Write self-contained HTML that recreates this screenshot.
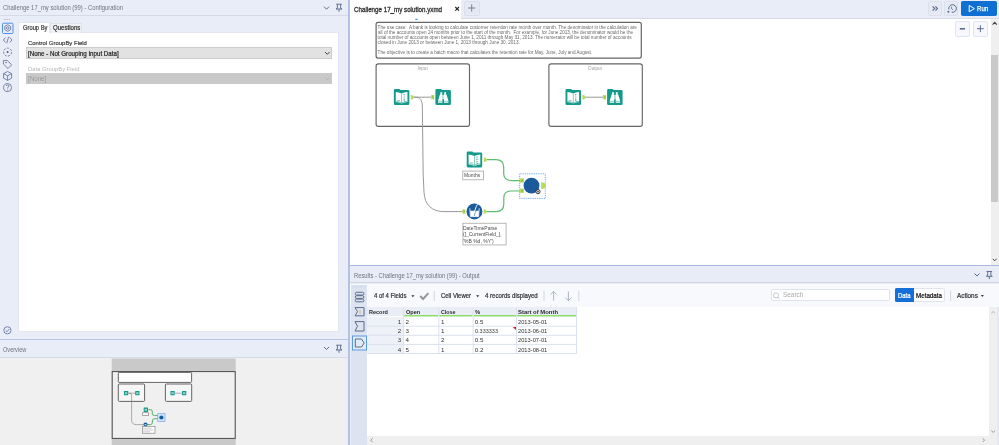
<!DOCTYPE html>
<html><head><meta charset="utf-8">
<style>
*{margin:0;padding:0;box-sizing:border-box}
html,body{width:999px;height:445px;overflow:hidden;background:#e9edf8;font-family:"Liberation Sans",sans-serif;position:relative}
.a{position:absolute}
.t{position:absolute;white-space:pre;line-height:1}
svg{position:absolute;overflow:visible}
</style></head><body>
<div id="wrap" style="position:absolute;left:0;top:0;width:999px;height:445px;filter:blur(0.35px)">

<!-- ===== LEFT CONFIG PANEL ===== -->
<div class="a" style="left:0;top:0;width:348px;height:16px;background:#e9edf8;border-bottom:1px solid #d5dae6"></div>
<div class="a" style="left:0;top:16px;width:348px;height:323px;background:#e9edf8"></div>
<!-- white content -->
<div class="a" style="left:18px;top:32px;width:321px;height:300px;background:#fff;border:1px solid #e3e6ee"></div>
<!-- tabs -->
<div class="a" style="left:50px;top:23px;width:32px;height:10px;background:#eef0f5;border:1px solid #e0e3ea;border-bottom:none"></div>
<div class="a" style="left:18px;top:22px;width:32px;height:11px;background:#fff;border:1px solid #e3e6ee;border-bottom:none"></div>
<!-- dropdowns -->
<div class="a" style="left:26px;top:47px;width:306px;height:12px;background:#e2e2e2;border:1px solid #cdcdcd"></div>
<div class="a" style="left:26px;top:73px;width:306px;height:11px;background:#c9c9c9"></div>
<!-- config header icons -->
<svg style="left:0;top:0" width="999" height="445">
 <!-- chevron + pin header -->
 <path d="M324 6.7 L326.5 9.2 L329 6.7" fill="none" stroke="#5b6b8c" stroke-width="1"/>
 <path transform="translate(0 0)" d="M336.2 4.2 H341.8 M337.4 4.2 V8.3 L336 9 H342 L340.6 8.3 V4.2 M339 9 V11.8" fill="none" stroke="#5b6b8c" stroke-width="0.95"/>
 <!-- dropdown chevrons -->
 <path d="M325 52 L327.3 54.3 L329.6 52" fill="none" stroke="#333" stroke-width="0.9"/>
 <path d="M325 77.5 L327.3 79.8 L329.6 77.5" fill="none" stroke="#b0b0b0" stroke-width="0.9"/>
 <!-- left icon column -->
 <g fill="#9aa3b8"><circle cx="4.3" cy="19.6" r="0.5"/><circle cx="6" cy="19.6" r="0.5"/><circle cx="7.7" cy="19.6" r="0.5"/><circle cx="9.4" cy="19.6" r="0.5"/></g>
 <rect x="2.5" y="23.2" width="10.5" height="10.3" rx="1" fill="#e6ecf8" stroke="#4f8fe6" stroke-width="1"/>
 <g fill="none" stroke="#64739a" stroke-width="0.85">
  <path d="M7.7 24.8 L10.6 26.4 V29.8 L7.7 31.4 L4.8 29.8 V26.4 Z"/><circle cx="7.7" cy="28.1" r="1.3"/>
  <path d="M5.6 37.5 L3.4 40 L5.6 42.5 M9.8 37.5 L12 40 L9.8 42.5 M8.6 36.8 L6.8 43.2"/>
  <circle cx="7.6" cy="52.1" r="4" stroke-dasharray="2.2 1.3"/>
  <path d="M3.4 60.5 V64 L8 68.5 L11.7 64.8 L7.1 60.3 Z"/>
  <path d="M7.6 71.5 L11.6 73.6 V78.2 L7.6 80.4 L3.6 78.2 V73.6 Z M3.6 73.6 L7.6 75.8 L11.6 73.6 M7.6 75.8 V80.4"/>
  <circle cx="7.6" cy="87.6" r="4"/>
  <circle cx="7.4" cy="330.3" r="3.6"/>
  <path d="M5.7 330.4 L7 331.7 L9.3 329"/>
 </g>
 <circle cx="5.9" cy="52.1" r="0" fill="#5b6b8c"/>
 <circle cx="7.6" cy="52.1" r="1.1" fill="#5b6b8c"/>
 <circle cx="6.1" cy="62.5" r="0.7" fill="#5b6b8c"/>
 <path d="M6.3 86 Q6.5 84.8 7.7 84.9 Q9 85 8.9 86.2 Q8.8 87 7.7 87.5 V88.5" fill="none" stroke="#5b6b8c" stroke-width="0.8"/>
 <circle cx="7.7" cy="90" r="0.5" fill="#5b6b8c"/>
</svg>

<!-- separator -->
<div class="a" style="left:0;top:339px;width:348px;height:1.3px;background:#b7c4e3"></div>
<!-- overview header -->
<div class="a" style="left:0;top:340.5px;width:348px;height:17px;background:#e9edf8;border-bottom:1px solid #d5dae6"></div>
<div class="a" style="left:0;top:358px;width:346px;height:87px;background:#f0f0f0"></div>

<!-- vertical splitter -->
<div class="a" style="left:348px;top:0;width:1.6px;height:445px;background:#b3c1e2"></div>

<!-- ===== CANVAS ===== -->
<div class="a" style="left:350px;top:0;width:649px;height:18.5px;background:#e9edf8;border-bottom:1px solid #d5dae6"></div>
<div class="a" style="left:350px;top:0;width:111px;height:19px;background:#fff"></div>
<div class="a" style="left:350px;top:18.5px;width:641px;height:246.5px;background:#fff"></div>
<div class="a" style="left:990.7px;top:18.5px;width:8.3px;height:246.5px;background:#efefef"></div>
<div class="a" style="left:990.8px;top:55px;width:7.1px;height:146.6px;background:#c9c9c9"></div>

<!-- splitter -->
<div class="a" style="left:350px;top:264.8px;width:649px;height:1.5px;background:#aab8de"></div>

<!-- ===== RESULTS ===== -->
<div class="a" style="left:350px;top:266.3px;width:649px;height:17px;background:#e8ecf6;border-bottom:1px solid #d2d6df"></div>
<div class="a" style="left:350px;top:284px;width:649px;height:22.5px;background:#f7f9fd"></div>
<div class="a" style="left:351.2px;top:284.5px;width:16px;height:161px;background:#dde3f0"></div>
<div class="a" style="left:367px;top:306.5px;width:622px;height:129.5px;background:#fff"></div>
<div class="a" style="left:367px;top:436px;width:622px;height:9px;background:#efefef"></div>
<div class="a" style="left:989px;top:306.5px;width:8.3px;height:138.5px;background:#efefef"></div>


<!-- canvas content -->
<svg style="left:0;top:0" width="999" height="445">
 <defs>
  <g id="fold"><path d="M0 1.3 Q0 0 1.3 0 H5.6 L6.6 0.9 H14.2 Q15.5 0.9 15.5 2.2 V14.6 Q15.5 15.9 14.2 15.9 H1.3 Q0 15.9 0 14.6 Z" fill="#14998a"/></g>
  <g id="book"><use href="#fold"/>
   <path d="M1.9 2.9 Q5 3 7.75 4.4 Q10.5 3 13.6 2.9 V13 Q10.5 13.1 7.75 14.5 Q5 13.1 1.9 13 Z" fill="#fff"/>
   <path d="M7.75 4.6 V14.2" stroke="#14998a" stroke-width="0.5"/>
   <path d="M1.9 12.3 Q5 12.4 7.75 13.7 Q10.5 12.4 13.6 12.3" fill="none" stroke="#14998a" stroke-width="0.5"/>
   <g fill="#14998a"><circle cx="10.3" cy="5.6" r="0.6"/><circle cx="10.3" cy="7.9" r="0.6"/><circle cx="10.3" cy="10.1" r="0.6"/><path d="M10 11 L11.6 12.3 L11.2 12.7 L9.6 11.4Z"/><path d="M3.3 11.5 H6.2" stroke="#14998a" stroke-width="0.5"/></g>
  </g>
  <g id="bino"><use href="#fold"/>
   <g fill="#fff">
    <rect x="5" y="3.1" width="1.8" height="2.2"/><rect x="8.8" y="3.1" width="1.8" height="2.2"/>
    <path d="M4.6 5.1 H7 V13.6 H2.6 V11.6 Z"/><path d="M11 5.1 H8.6 V13.6 H13 V11.6 Z"/>
    <rect x="7" y="5.8" width="1.6" height="4.4" opacity="0.75"/>
   </g>
   <path d="M2.6 12.2 H7 M8.6 12.2 H13" stroke="#14998a" stroke-width="0.5"/>
  </g>
  <g id="ain"><path d="M0 0 H3 V4.4 H0 Z" fill="#b5dc5c"/><rect x="1" y="1.2" width="1.4" height="2" fill="#8fc440"/></g>
  <g id="aout"><path d="M0 0 H1.2 Q3 0.4 3 2.2 Q3 4 1.2 4.4 H0 Z" fill="#b5dc5c"/></g>
 </defs>
 <!-- comment -->
 <rect x="376.1" y="22.3" width="265.2" height="35.8" rx="2" fill="#fff" stroke="#666" stroke-width="1.2"/>
 <!-- containers -->
 <rect x="376.1" y="63.8" width="93.4" height="62.6" rx="2.2" fill="none" stroke="#666" stroke-width="1.15"/>
 <rect x="548.9" y="63.8" width="93.4" height="62.6" rx="2.2" fill="none" stroke="#666" stroke-width="1.15"/>
 <!-- gray connections -->
 <g fill="none" stroke="#999" stroke-width="1">
  <path d="M413.5 97.2 H431.2"/>
  <path d="M413.5 97.2 H416 C420 97.2 422.2 100 422.3 106 L423.2 175 L424 192 C424.5 205 432 211.6 444 211.6 H462.4"/>
  <path d="M585 97.2 H603.3"/>
 </g>
 <g fill="none" stroke="#5cbd70" stroke-width="1.2">
  <path d="M486.9 159.7 H496 C501 159.7 503.6 162 503.7 167 V174 C504 179 507 180.7 512 180.7 H520"/>
  <path d="M520 191 H511 C506 191 503.8 193.5 503.8 198 V204 C503.8 209 501 211.6 496 211.6 H486.4"/>
 </g>
 <!-- tools -->
 <use href="#book" x="393.85" y="89.1"/>
 <use href="#bino" x="435.4" y="89.1"/>
 <use href="#book" x="565.5" y="89.1"/>
 <use href="#bino" x="607.1" y="89.1"/>
 <use href="#book" x="466.7" y="151.5"/>
 <use href="#aout" x="410.8" y="95"/>
 <use href="#ain" x="431.2" y="95"/>
 <use href="#aout" x="582.4" y="95"/>
 <use href="#ain" x="603.1" y="95"/>
 <use href="#aout" x="483.9" y="157.5"/>
 <!-- DateTimeParse -->
 <use href="#ain" x="462.4" y="209.3"/>
 <use href="#aout" x="483.6" y="209.3"/>
 <circle cx="474.45" cy="211.45" r="7.95" fill="#1b5a9b"/>
 <path d="M469.8 208.3 L470.4 216.6 H478.6 L479.2 208.3" fill="none" stroke="#fff" stroke-width="0.8"/>
 <path d="M470.2 210.8 H478.8 L478.5 216.6 H470.5 Z" fill="#fff"/>
 <path d="M477.6 204.2 C475.5 207 474.5 212 473.6 216.2" fill="none" stroke="#fff" stroke-width="1"/>
 <path d="M476.8 209 C475.6 211.5 474.8 213.5 474.2 216" fill="none" stroke="#1b5a9b" stroke-width="0.6"/>
 <!-- batch macro -->
 <rect x="519.7" y="173.8" width="25.6" height="24.6" fill="none" stroke="#5fa2ec" stroke-width="0.9" stroke-dasharray="1 0.8"/>
 <g transform="translate(520 178.4) scale(1.3 0.97)"><use href="#ain"/></g>
 <g transform="translate(520 188.6) scale(1.3 0.97)"><use href="#ain"/></g>
 <path d="M541.2 182.2 H542.6 Q545.8 182.8 545.8 185.6 Q545.8 188.4 542.6 189 H541.2 Z" fill="#b5dc5c"/>
 <circle cx="531.5" cy="185.6" r="7.9" fill="#1b5a9b"/>
 <circle cx="538" cy="191.6" r="2.1" fill="#fff" stroke="#222" stroke-width="0.9"/>
 <path d="M536.9 191.6 H539.1 M538 190.5 V192.7" stroke="#222" stroke-width="0.6"/>
 <!-- labels -->
 <rect x="462.7" y="171.1" width="20.8" height="8.6" fill="#fff" stroke="#b8b8b8" stroke-width="1"/>
 <rect x="462.9" y="223.3" width="43.2" height="21.6" fill="#fff" stroke="#b8b8b8" stroke-width="1"/>
 <!-- blue tick -->
 <rect x="415.3" y="18.8" width="2.3" height="1.2" fill="#3a9be6"/>
</svg>


<!-- canvas tab bar / toolbar controls -->
<div class="a" style="left:463.8px;top:0.5px;width:15.8px;height:15px;background:#e4e9f4;border:1px solid #d9dfeb;border-radius:1.5px"></div>
<div class="a" style="left:927.6px;top:1.1px;width:14.6px;height:14.6px;background:#e6eaf5;border:1px solid #dce1ec;border-radius:1.5px"></div>
<div class="a" style="left:944.3px;top:1.1px;width:14px;height:14.6px;background:#e6eaf5;border:1px solid #dce1ec;border-radius:1.5px"></div>
<div class="a" style="left:960.9px;top:0.9px;width:36.5px;height:15px;background:#0f6fd3;border-radius:1.8px"></div>
<div class="a" style="left:954.8px;top:21.2px;width:15.4px;height:15.5px;background:#f6f8fd;border:1px solid #dfe6f3;border-radius:2px"></div>
<div class="a" style="left:972.5px;top:21.2px;width:15.1px;height:15.5px;background:#f6f8fd;border:1px solid #dfe6f3;border-radius:2px"></div>
<svg style="left:0;top:0" width="999" height="445">
 <!-- tab close X -->
 <path d="M455.3 7 L459 10.7 M459 7 L455.3 10.7" stroke="#222" stroke-width="1.1"/>
 <!-- + tab -->
 <path d="M471.7 4.3 V11.6 M468 8 H475.4" stroke="#6a7590" stroke-width="0.9"/>
 <!-- >> -->
 <path d="M932.6 6.4 L934.7 8.5 L932.6 10.6 M935.4 6.4 L937.5 8.5 L935.4 10.6" fill="none" stroke="#5b6b8c" stroke-width="1.1"/>
 <!-- history -->
 <path d="M948.9 9.5 A3.8 3.8 0 1 1 951.7 12.2" fill="none" stroke="#5b6b8c" stroke-width="1"/>
 <path d="M951.6 6.6 V8.8 L953 9.8" fill="none" stroke="#5b6b8c" stroke-width="0.8"/>
 <circle cx="948.4" cy="11.7" r="1" fill="#5b6b8c"/>
 <!-- run triangle -->
 <path d="M969.2 5.4 V11.8 L974.4 8.6 Z" fill="none" stroke="#fff" stroke-width="1"/>
 <!-- zoom - + -->
 <path d="M959.8 28.8 H965" stroke="#5b6b8c" stroke-width="1.6"/>
 <path d="M977 28.7 H983.7 M980.35 25.3 V32.1" stroke="#5b6b8c" stroke-width="1"/>
 <!-- canvas vscroll arrows -->
 <path d="M992.6 24.6 L994.7 22.4 L996.8 24.6" fill="none" stroke="#444" stroke-width="1.1"/>
 <path d="M992.8 258.8 L994.7 260.8 L996.6 258.8" fill="none" stroke="#444" stroke-width="1"/>
 <!-- results header chevron + pin -->
 <path d="M974.5 273.5 L977 276 L979.5 273.5" fill="none" stroke="#5b6b8c" stroke-width="1"/>
 <path transform="translate(650.3 267.3)" d="M336.2 4.2 H341.8 M337.4 4.2 V8.3 L336 9 H342 L340.6 8.3 V4.2 M339 9 V11.8" fill="none" stroke="#5b6b8c" stroke-width="0.95"/>
 <!-- overview header chevron + pin -->
 <path d="M324 347 L326.5 349.5 L329 347" fill="none" stroke="#5b6b8c" stroke-width="1"/>
 <path transform="translate(0 341)" d="M336.2 4.2 H341.8 M337.4 4.2 V8.3 L336 9 H342 L340.6 8.3 V4.2 M339 9 V11.8" fill="none" stroke="#5b6b8c" stroke-width="0.95"/>
</svg>


<!-- results toolbar controls -->
<div class="a" style="left:771px;top:289px;width:118.7px;height:12.2px;background:#fff;border:1px solid #dde2ec;border-radius:1.5px"></div>
<div class="a" style="left:895px;top:288px;width:49.6px;height:13.5px;background:#fff;border:1px solid #e0e4ed;border-radius:1.5px"></div>
<div class="a" style="left:895px;top:288px;width:18.5px;height:13.5px;background:#1470d8;border-radius:1.5px 0 0 1.5px"></div>
<!-- table -->
<div class="a" style="left:367.3px;top:307.3px;width:209.4px;height:9.2px;background:#e9edf6"></div>
<div class="a" style="left:367.3px;top:316.5px;width:36px;height:37px;background:#eef1f8"></div>
<svg style="left:0;top:0" width="999" height="445">
 <g fill="#8edb6c">
  <rect x="404.2" y="315" width="34" height="1.5"/><rect x="439.3" y="315" width="33.2" height="1.5"/>
  <rect x="473.6" y="315" width="42.4" height="1.5"/><rect x="517.1" y="315" width="59.4" height="1.5"/>
 </g>
 <g stroke="#dbe1ee" stroke-width="1">
  <path d="M367.3 326.2 H576.7 M367.3 335.3 H576.7 M367.3 344.4 H576.7 M367.3 353.5 H576.7"/>
  <path d="M403.6 307.3 V354 M438.8 307.3 V354 M473.1 307.3 V354 M516.6 307.3 V354 M576.5 307.3 V354"/>
 </g>
 <path d="M512.7 326.9 H516 V330 Z" fill="#e8131b"/>
 <!-- toolbar icons -->
 <path d="M411.3 295.3 H414.5 L412.9 297.3 Z" fill="#333"/>
 <path d="M476.1 295.3 H479.3 L477.7 297.3 Z" fill="#333"/>
 <path d="M980.9 295.1 H983.9 L982.4 297 Z" fill="#333"/>
 <path d="M420.2 296 L423.1 299 L428.4 293.2" fill="none" stroke="#969696" stroke-width="2"/>
 <g stroke="#d2d6de" stroke-width="1">
  <path d="M434.2 290.8 V300.8 M544 290.8 V300.8 M578.8 290.8 V300.8 M950.6 290.5 V301"/>
 </g>
 <g fill="none" stroke="#a3abbb" stroke-width="0.9">
  <path d="M553.6 291.5 V300.6 M550.6 294.5 L553.6 291.5 L556.6 294.5"/>
  <path d="M568.4 291.5 V300.6 M565.4 297.6 L568.4 300.6 L571.4 297.6"/>
 </g>
 <circle cx="776" cy="295.4" r="2.6" fill="none" stroke="#b0b8c8" stroke-width="0.8"/>
 <path d="M777.8 297.3 L779.5 299" stroke="#b0b8c8" stroke-width="0.8"/>
 <!-- results left icon column -->
 <g fill="#b5bccb"><circle cx="353.5" cy="286.8" r="0.45"/><circle cx="355.3" cy="286.8" r="0.45"/><circle cx="357.1" cy="286.8" r="0.45"/><circle cx="358.9" cy="286.8" r="0.45"/><circle cx="360.7" cy="286.8" r="0.45"/><circle cx="362.5" cy="286.8" r="0.45"/><circle cx="364.3" cy="286.8" r="0.45"/></g>
 <g fill="none" stroke="#5b6b8c" stroke-width="1">
  <rect x="355.3" y="292.3" width="8.6" height="2.7" rx="1.3"/>
  <rect x="355.3" y="295.7" width="8.6" height="2.7" rx="1.3"/>
  <rect x="355.3" y="299.1" width="8.6" height="2.7" rx="1.3"/>
  <path d="M355 307.6 H364 V315.8 H355 L357.5 311.7 Z"/>
  <path d="M355 321.6 H364 V331 H355 L357.5 326.3 Z"/>
 </g>
 <path d="M360 310 V314" stroke="#e0b040" stroke-width="0.8"/>
 <rect x="352.5" y="336" width="14" height="14" fill="#e3eaf7" stroke="#5a9ae6" stroke-width="1"/>
 <path d="M355.3 339 H361.5 L364.2 343 L361.5 347 H355.3 Z" fill="none" stroke="#5b6b8c" stroke-width="1"/>
 <!-- results scroll arrows -->
 <path d="M991.3 313.3 L993.2 311.5 L995.1 313.3" fill="none" stroke="#b0b0b0" stroke-width="0.9"/>
 <path d="M991.3 430.6 L993.2 432.4 L995.1 430.6" fill="none" stroke="#909090" stroke-width="0.9"/>
 <path d="M372.5 438.3 L370.8 440.2 L372.5 442.1" fill="none" stroke="#909090" stroke-width="0.9"/>
 <path d="M982.8 438.3 L984.5 440.2 L982.8 442.1" fill="none" stroke="#909090" stroke-width="0.9"/>
</svg>
<div class="a" style="left:997.3px;top:306.5px;width:1.7px;height:138.5px;background:#e3e8f3"></div>


<!-- overview mini -->
<svg style="left:0;top:0" width="999" height="445">
 <rect x="111.7" y="358.5" width="124" height="86.5" fill="#c9c9c9"/>
 <rect x="112.2" y="371.6" width="123" height="66.8" fill="#f0f0f0" stroke="#4a4a4a" stroke-width="1"/>
 <rect x="118.3" y="372.4" width="73.3" height="10" rx="0.8" fill="#fff" stroke="#555" stroke-width="0.9"/>
 <rect x="118.3" y="384" width="26.3" height="17.4" rx="1" fill="#f6f6f6" stroke="#555" stroke-width="0.9"/>
 <rect x="165.4" y="384" width="26.3" height="17.4" rx="1" fill="#f6f6f6" stroke="#555" stroke-width="0.9"/>
 <g fill="#14998a">
  <rect x="123.9" y="391" width="4.3" height="4.3" rx="0.5"/><rect x="135.2" y="391" width="4.3" height="4.3" rx="0.5"/>
  <rect x="170.4" y="391" width="4.3" height="4.3" rx="0.5"/><rect x="182" y="391" width="4.3" height="4.3" rx="0.5"/>
  <rect x="143.7" y="407.6" width="4.3" height="4.3" rx="0.5"/>
 </g>
 <g fill="#fff" opacity="0.55"><rect x="124.8" y="392.2" width="2.5" height="2"/><rect x="136.1" y="392.2" width="2.5" height="2"/><rect x="171.3" y="392.2" width="2.5" height="2"/><rect x="182.9" y="392.2" width="2.5" height="2"/><rect x="144.6" y="408.8" width="2.5" height="2"/></g>
 <g fill="none" stroke="#7a7a7a" stroke-width="0.6">
  <path d="M128.4 393.2 H135 M174.9 393.2 H181.8"/>
  <path d="M128.4 393.2 H130 Q131.6 393.2 131.6 396 V420.5 Q131.8 424.6 136.5 424.6 H143.3"/>
 </g>
 <g fill="none" stroke="#3fa955" stroke-width="0.9">
  <path d="M148.2 409.7 H150.8 Q152.2 409.7 152.3 411.5 V413.5 Q152.5 415.6 154.5 415.6 H157.8"/>
  <path d="M157.8 418.7 H154.5 Q152.4 418.7 152.4 420.8 V422.5 Q152.3 424.6 150.3 424.6 H147.5"/>
 </g>
 <rect x="157.8" y="413.7" width="7.2" height="7.8" fill="#d5e5fb" stroke="#5a9be8" stroke-width="0.6"/>
 <circle cx="161.4" cy="417.5" r="2.1" fill="#1b5a9b"/>
 <circle cx="145.5" cy="424.5" r="2.1" fill="#1b5a9b"/><rect x="144.6" y="424" width="1.8" height="1.4" fill="#fff" opacity="0.7"/>
 <rect x="142.4" y="412.8" width="6.3" height="2.6" fill="#fff" stroke="#777" stroke-width="0.6"/>
 <rect x="142.4" y="426.6" width="12.6" height="6.6" fill="#fff" stroke="#777" stroke-width="0.6"/>
 <path d="M143.2 428.2 H151.5 M143.2 430 H153.5 M143.2 431.8 H150" stroke="#9a9a9a" stroke-width="0.5"/>
</svg>

<div class="t" style="left:2.90px;top:5.00px;font-size:6.4px;font-weight:400;color:#6f7280;transform:scaleX(0.9204);transform-origin:left top;">Challenge 17_my solution (99) - Configuration</div>
<div class="t" style="left:22.60px;top:25.00px;font-size:6.3px;font-weight:400;color:#3c3c3c;transform:scaleX(0.9170);transform-origin:left top;-webkit-text-stroke:0.22px currentColor;">Group By</div>
<div class="t" style="left:53.00px;top:25.00px;font-size:6.3px;font-weight:400;color:#333;transform:scaleX(0.9626);transform-origin:left top;-webkit-text-stroke:0.22px currentColor;">Questions</div>
<div class="t" style="left:27.80px;top:40.00px;font-size:6.2px;font-weight:400;color:#383838;transform:scaleX(0.9621);transform-origin:left top;-webkit-text-stroke:0.18px currentColor;">Control GroupBy Field</div>
<div class="t" style="left:28.10px;top:51.00px;font-size:6.5px;font-weight:400;color:#222;transform:scaleX(0.9498);transform-origin:left top;-webkit-text-stroke:0.2px currentColor;">[None - Not Grouping Input Data]</div>
<div class="t" style="left:27.80px;top:66.00px;font-size:6.2px;font-weight:400;color:#b9b9b9;transform:scaleX(0.9458);transform-origin:left top;">Data GroupBy Field</div>
<div class="t" style="left:28.10px;top:76.00px;font-size:6.8px;font-weight:400;color:#9a9a9a;transform:scaleX(0.9136);transform-origin:left top;">[None]</div>
<div class="t" style="left:3.00px;top:347.00px;font-size:6.4px;font-weight:400;color:#6f7280;transform:scaleX(0.8746);transform-origin:left top;">Overview</div>
<div class="t" style="left:353.80px;top:7.00px;font-size:6.9px;font-weight:400;color:#2e2e2e;transform:scaleX(0.9010);transform-origin:left top;-webkit-text-stroke:0.3px currentColor;">Challenge 17_my solution.yxmd</div>
<div class="t" style="left:353.90px;top:273.00px;font-size:6.5px;font-weight:400;color:#6f7280;transform:scaleX(0.8921);transform-origin:left top;">Results - Challenge 17_my solution (99) - Output</div>
<div class="t" style="left:373.50px;top:293.00px;font-size:6.6px;font-weight:400;color:#333;transform:scaleX(0.9020);transform-origin:left top;-webkit-text-stroke:0.22px currentColor;">4 of 4 Fields</div>
<div class="t" style="left:441.10px;top:293.00px;font-size:6.6px;font-weight:400;color:#333;transform:scaleX(0.9027);transform-origin:left top;-webkit-text-stroke:0.22px currentColor;">Cell Viewer</div>
<div class="t" style="left:484.80px;top:293.00px;font-size:6.6px;font-weight:400;color:#333;transform:scaleX(0.9215);transform-origin:left top;-webkit-text-stroke:0.22px currentColor;">4 records displayed</div>
<div class="t" style="left:782.60px;top:292.00px;font-size:6.6px;font-weight:400;color:#a8a8a8;transform:scaleX(0.9758);transform-origin:left top;">Search</div>
<div class="t" style="left:898.00px;top:293.00px;font-size:6.3px;font-weight:400;color:#fff;transform:scaleX(0.9390);transform-origin:left top;-webkit-text-stroke:0.22px currentColor;">Data</div>
<div class="t" style="left:916.20px;top:293.00px;font-size:6.3px;font-weight:400;color:#111;transform:scaleX(0.9899);transform-origin:left top;-webkit-text-stroke:0.22px currentColor;">Metadata</div>
<div class="t" style="left:957.30px;top:293.00px;font-size:6.6px;font-weight:400;color:#333;transform:scaleX(0.9618);transform-origin:left top;-webkit-text-stroke:0.22px currentColor;">Actions</div>
<div class="t" style="left:976.90px;top:6.00px;font-size:6.8px;font-weight:400;color:#fff;transform:scaleX(0.8982);transform-origin:left top;-webkit-text-stroke:0.25px currentColor;">Run</div>
<div class="t" style="left:377.60px;top:26.00px;font-size:4.64px;font-weight:400;color:#6a6a6a;">The use case:&nbsp; A bank is looking to calculate customer retention rate month over month. The denominator in the calculation are</div>
<div class="t" style="left:377.60px;top:31.00px;font-size:4.64px;font-weight:400;color:#6a6a6a;transform:scaleX(0.9948);transform-origin:left top;">all of the accounts open 24 months prior to the start of the month.&nbsp; For example, for June 2013, the denominator would be the</div>
<div class="t" style="left:377.60px;top:36.00px;font-size:4.64px;font-weight:400;color:#6a6a6a;">total number of accounts open between June 1, 2011 through May 31, 2013. The numerator will be total number of accounts</div>
<div class="t" style="left:377.60px;top:41.00px;font-size:4.64px;font-weight:400;color:#6a6a6a;">closed in June 2013 or between June 1, 2013 through June 30, 2013.</div>
<div class="t" style="left:377.60px;top:51.00px;font-size:4.64px;font-weight:400;color:#6a6a6a;">The objective is to create a batch macro that calculates the retention rate for May, June, July and August.</div>
<div class="t" style="left:417.49px;top:67.00px;font-size:4.6px;font-weight:400;color:#9a9a9a;">Input</div>
<div class="t" style="left:588.10px;top:67.00px;font-size:4.6px;font-weight:400;color:#9a9a9a;">Output</div>
<div class="t" style="left:464.00px;top:173.00px;font-size:5.9px;font-weight:400;color:#4a4a4a;transform:scaleX(0.8382);transform-origin:left top;">Months</div>
<div class="t" style="left:463.40px;top:226.00px;font-size:5.9px;font-weight:400;color:#4a4a4a;transform:scaleX(0.8427);transform-origin:left top;">DateTimeParse</div>
<div class="t" style="left:463.40px;top:232.00px;font-size:5.9px;font-weight:400;color:#4a4a4a;transform:scaleX(0.8420);transform-origin:left top;">([_CurrentField_],</div>
<div class="t" style="left:463.40px;top:239.00px;font-size:5.9px;font-weight:400;color:#4a4a4a;transform:scaleX(0.8507);transform-origin:left top;">'%B %d, %Y')</div>
<div class="t" style="left:369.00px;top:309.00px;font-size:6.2px;font-weight:700;color:#2a2a2a;transform:scaleX(0.8862);transform-origin:left top;">Record</div>
<div class="t" style="left:405.80px;top:309.00px;font-size:6.2px;font-weight:700;color:#2a2a2a;transform:scaleX(0.8971);transform-origin:left top;">Open</div>
<div class="t" style="left:440.60px;top:309.00px;font-size:6.2px;font-weight:700;color:#2a2a2a;transform:scaleX(0.8541);transform-origin:left top;">Close</div>
<div class="t" style="left:474.80px;top:309.00px;font-size:6.2px;font-weight:700;color:#2a2a2a;transform:scaleX(0.9428);transform-origin:left top;">%</div>
<div class="t" style="left:518.00px;top:309.00px;font-size:6.2px;font-weight:700;color:#2a2a2a;transform:scaleX(0.9538);transform-origin:left top;">Start of Month</div>
<div class="t" style="left:397.75px;top:319.00px;font-size:6.2px;font-weight:400;color:#333;">1</div>
<div class="t" style="left:405.60px;top:319.00px;font-size:6.2px;font-weight:400;color:#333;">2</div>
<div class="t" style="left:441.00px;top:319.00px;font-size:6.2px;font-weight:400;color:#333;">1</div>
<div class="t" style="left:474.80px;top:319.00px;font-size:6.2px;font-weight:400;color:#333;">0.5</div>
<div class="t" style="left:518.00px;top:319.00px;font-size:6.2px;font-weight:400;color:#333;transform:scaleX(0.9256);transform-origin:left top;">2013-05-01</div>
<div class="t" style="left:397.75px;top:328.00px;font-size:6.2px;font-weight:400;color:#333;">2</div>
<div class="t" style="left:405.60px;top:328.00px;font-size:6.2px;font-weight:400;color:#333;">3</div>
<div class="t" style="left:441.00px;top:328.00px;font-size:6.2px;font-weight:400;color:#333;">1</div>
<div class="t" style="left:474.80px;top:328.00px;font-size:6.2px;font-weight:400;color:#333;transform:scaleX(0.8910);transform-origin:left top;">0.333333</div>
<div class="t" style="left:518.00px;top:328.00px;font-size:6.2px;font-weight:400;color:#333;transform:scaleX(0.9256);transform-origin:left top;">2013-06-01</div>
<div class="t" style="left:397.75px;top:337.00px;font-size:6.2px;font-weight:400;color:#333;">3</div>
<div class="t" style="left:405.60px;top:337.00px;font-size:6.2px;font-weight:400;color:#333;">4</div>
<div class="t" style="left:441.00px;top:337.00px;font-size:6.2px;font-weight:400;color:#333;">2</div>
<div class="t" style="left:474.80px;top:337.00px;font-size:6.2px;font-weight:400;color:#333;">0.5</div>
<div class="t" style="left:518.00px;top:337.00px;font-size:6.2px;font-weight:400;color:#333;transform:scaleX(0.9256);transform-origin:left top;">2013-07-01</div>
<div class="t" style="left:397.75px;top:347.00px;font-size:6.2px;font-weight:400;color:#333;">4</div>
<div class="t" style="left:405.60px;top:347.00px;font-size:6.2px;font-weight:400;color:#333;">5</div>
<div class="t" style="left:441.00px;top:347.00px;font-size:6.2px;font-weight:400;color:#333;">1</div>
<div class="t" style="left:474.80px;top:347.00px;font-size:6.2px;font-weight:400;color:#333;">0.2</div>
<div class="t" style="left:518.00px;top:347.00px;font-size:6.2px;font-weight:400;color:#333;transform:scaleX(0.9256);transform-origin:left top;">2013-08-01</div>

</div>
</body></html>
